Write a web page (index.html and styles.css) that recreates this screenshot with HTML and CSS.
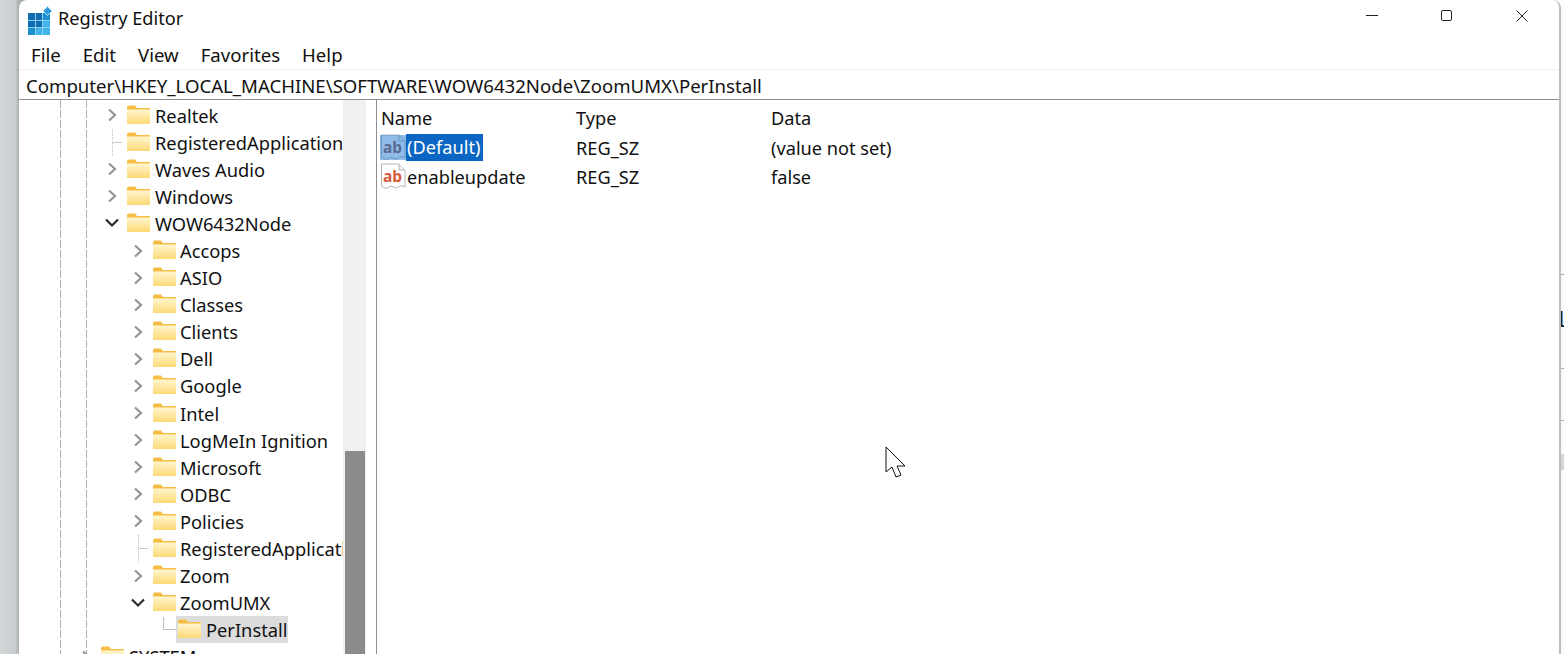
FILE: index.html
```html
<!DOCTYPE html>
<html lang="en">
<head>
<meta charset="utf-8">
<title>Registry Editor</title>
<link rel="stylesheet" href="styles.css">
</head>
<body>
<svg class="defs" width="0" height="0" aria-hidden="true">
  <defs>
    <linearGradient id="fg" x1="0" y1="0" x2="0" y2="1">
      <stop offset="0" stop-color="#fff6cf"/>
      <stop offset="1" stop-color="#fcd975"/>
    </linearGradient>
    <symbol id="folder" viewBox="0 0 23 19">
      <path d="M0 2.500Q0 .5 2 .5H8L10 3H23V18Q23 19 22 19H1Q0 19 0 18Z" fill="#f6bd45"/>
      <path d="M0 4.500H23V18Q23 19 22 19H1Q0 19 0 18Z" fill="url(#fg)"/>
    </symbol>
    <symbol id="closed" viewBox="0 0 12 16"><path d="M3 2.500L9 8L3 13.500" fill="none" stroke="#949494" stroke-width="2.200"/></symbol>
    <symbol id="open" viewBox="0 0 14 12"><path d="M1 2.500L7 8.500L13 2.500" fill="none" stroke="#2b2b2b" stroke-width="2.200"/></symbol>
    <symbol id="ab" viewBox="0 0 26 27">
      <path d="M1.500 1H19L25 7V24L21 22.500L16 25L11 23L6 25.500L1.500 23Z" fill="#fff" stroke="#b4b4b4" stroke-width="1"/>
      <path d="M19 1V7H25" fill="#f2f2f2" stroke="#b4b4b4" stroke-width="1"/>
    </symbol>
  </defs>
</svg>
<div class="desktop-left"></div>
<main class="window">
  <header class="titlebar">
    <svg class="app-icon" width="24" height="29" viewBox="0 0 24 29" aria-hidden="true">
      <rect x="0" y="7" width="22" height="22" fill="#1d8fd0"/>
      <path d="M0 14.500H22M0 21.500H22M7.500 7V29M14.500 7V29" stroke="#8fd0ee" stroke-width="1"/>
      <rect x="0" y="7" width="7" height="7" fill="#0f6cb0"/>
      <rect x="8" y="7" width="6" height="7" fill="#0f6cb0"/>
      <rect x="0" y="15" width="7" height="6" fill="#0f6cb0"/>
      <rect x="8" y="15" width="6" height="6" fill="#0f6cb0"/>
      <rect x="15" y="22" width="7" height="7" fill="#3fb4e8"/>
      <rect x="8" y="22" width="6" height="7" fill="#3fb4e8"/>
      <rect x="15" y="15" width="7" height="6" fill="#3fb4e8"/>
      <path d="M19.500 0.500L24 5L19.500 9.500L15 5Z" fill="#2f9bd8" stroke="#bfe3f5" stroke-width="1"/>
    </svg>
    <span class="title">Registry Editor</span>
    <div class="controls">
      <svg class="ctl" width="12" height="12" viewBox="0 0 12 12" aria-hidden="true"><path d="M0 5.500H12" stroke="#222" stroke-width="1"/></svg>
      <svg class="ctl" width="12" height="12" viewBox="0 0 12 12" aria-hidden="true"><rect x=".5" y=".5" width="10" height="10" rx="1.500" fill="none" stroke="#222" stroke-width="1"/></svg>
      <svg class="ctl" width="12" height="12" viewBox="0 0 12 12" aria-hidden="true"><path d="M.5 .5L11.500 11.500M11.500 .5L.5 11.500" stroke="#222" stroke-width="1"/></svg>
    </div>
  </header>
  <nav class="menubar">
    <span>File</span><span>Edit</span><span>View</span><span>Favorites</span><span>Help</span>
  </nav>
  <div class="address">Computer\HKEY_LOCAL_MACHINE\SOFTWARE\WOW6432Node\ZoomUMX\PerInstall</div>
  <div class="panes">
    <section class="tree">
      <div class="rows">
        <div class="row l1"><svg class="tw"><use href="#closed"/></svg><svg class="fo"><use href="#folder"/></svg><span>Realtek</span></div>
        <div class="row l1"><i class="tw stub"></i><svg class="fo"><use href="#folder"/></svg><span>RegisteredApplications</span></div>
        <div class="row l1"><svg class="tw"><use href="#closed"/></svg><svg class="fo"><use href="#folder"/></svg><span>Waves Audio</span></div>
        <div class="row l1"><svg class="tw"><use href="#closed"/></svg><svg class="fo"><use href="#folder"/></svg><span>Windows</span></div>
        <div class="row l1"><svg class="tw op"><use href="#open"/></svg><svg class="fo"><use href="#folder"/></svg><span>WOW6432Node</span></div>
        <div class="row l2"><svg class="tw"><use href="#closed"/></svg><svg class="fo"><use href="#folder"/></svg><span>Accops</span></div>
        <div class="row l2"><svg class="tw"><use href="#closed"/></svg><svg class="fo"><use href="#folder"/></svg><span>ASIO</span></div>
        <div class="row l2"><svg class="tw"><use href="#closed"/></svg><svg class="fo"><use href="#folder"/></svg><span>Classes</span></div>
        <div class="row l2"><svg class="tw"><use href="#closed"/></svg><svg class="fo"><use href="#folder"/></svg><span>Clients</span></div>
        <div class="row l2"><svg class="tw"><use href="#closed"/></svg><svg class="fo"><use href="#folder"/></svg><span>Dell</span></div>
        <div class="row l2"><svg class="tw"><use href="#closed"/></svg><svg class="fo"><use href="#folder"/></svg><span>Google</span></div>
        <div class="row l2"><svg class="tw"><use href="#closed"/></svg><svg class="fo"><use href="#folder"/></svg><span>Intel</span></div>
        <div class="row l2"><svg class="tw"><use href="#closed"/></svg><svg class="fo"><use href="#folder"/></svg><span>LogMeIn Ignition</span></div>
        <div class="row l2"><svg class="tw"><use href="#closed"/></svg><svg class="fo"><use href="#folder"/></svg><span>Microsoft</span></div>
        <div class="row l2"><svg class="tw"><use href="#closed"/></svg><svg class="fo"><use href="#folder"/></svg><span>ODBC</span></div>
        <div class="row l2"><svg class="tw"><use href="#closed"/></svg><svg class="fo"><use href="#folder"/></svg><span>Policies</span></div>
        <div class="row l2"><i class="tw stub"></i><svg class="fo"><use href="#folder"/></svg><span>RegisteredApplications</span></div>
        <div class="row l2"><svg class="tw"><use href="#closed"/></svg><svg class="fo"><use href="#folder"/></svg><span>Zoom</span></div>
        <div class="row l2"><svg class="tw op"><use href="#open"/></svg><svg class="fo"><use href="#folder"/></svg><span>ZoomUMX</span></div>
        <div class="row l3"><i class="tw elbow"></i><div class="sel"><svg class="fo"><use href="#folder"/></svg><span>PerInstall</span></div></div>
        <div class="row l0"><svg class="tw"><use href="#closed"/></svg><svg class="fo"><use href="#folder"/></svg><span>SYSTEM</span></div>
      </div>
      <div class="scrollbar"><div class="thumb"></div></div>
    </section>
    <section class="list">
      <div class="list-row head"><span class="c-name">Name</span><span class="c-type">Type</span><span>Data</span></div>
      <div class="list-row">
        <span class="c-name"><span class="val-icon sel-icon"><svg width="26" height="27" aria-hidden="true"><use href="#ab"/></svg><b>ab</b></span><span class="hl">(Default)</span></span>
        <span class="c-type">REG_SZ</span><span>(value not set)</span>
      </div>
      <div class="list-row">
        <span class="c-name"><span class="val-icon"><svg width="26" height="27" aria-hidden="true"><use href="#ab"/></svg><b>ab</b></span><span class="nm">enableupdate</span></span>
        <span class="c-type">REG_SZ</span><span>false</span>
      </div>
      <svg class="cursor" width="22" height="32" viewBox="0 0 22 32" aria-hidden="true"><path d="M1 1V26L7 21L11 31L16 29L12 20H20Z" fill="#fff" stroke="#111" stroke-width="1"/></svg>
    </section>
  </div>
</main>
<div class="desktop-right">
  <div class="mark m1"></div><div class="glyph">1</div><div class="mark m2"></div><div class="mark m3"></div><div class="mark m4"></div>
</div>
</body>
</html>
```
FILE: styles.css
```css
* { box-sizing: border-box; }
html, body { margin: 0; height: 100%; }
body {
  display: flex;
  height: 654px;
  overflow: hidden;
  background: #fff;
  color: #111;
  font-family: "Noto Sans", "Open Sans", sans-serif;
  font-size: 18.6px;
}
.defs { position: absolute; }
.desktop-left {
  width: 27px;
  margin-right: -8px;
  flex: none;
  background: linear-gradient(90deg, #d2d7d8 0, #c8cecf 15px, #a9aeaf 19px);
}
.window {
  width: 1542px;
  flex: none;
  position: relative;
  display: flex;
  flex-direction: column;
  background: #fff;
  overflow: hidden;
  border-right: 2px solid #bdbdbd;
  border-radius: 8px 8px 0 0;
}
.titlebar {
  height: 37px;
  flex: none;
  display: flex;
  align-items: center;
  padding-left: 9px;
}
.app-icon { flex: none; margin-right: 6px; margin-top: 3px; }
.title { font-size: 18.2px; margin-top: -2px; }
.controls {
  margin-left: auto;
  display: flex;
  gap: 63px;
  padding-right: 31px;
  margin-top: -5px;
}
.menubar {
  height: 33px;
  flex: none;
  display: flex;
  align-items: center;
  gap: 22px;
  padding: 2px 0 0 12px;
  border-bottom: 1px solid #efefef;
}
.address {
  height: 30px;
  flex: none;
  display: flex;
  align-items: center;
  padding: 1px 0 0 7px;
  border-bottom: 1px solid #8f8f8f;
  white-space: nowrap;
}
.panes { flex: 1; display: flex; min-height: 0; font-size: 18.2px; }
.tree {
  width: 347px;
  flex: none;
  display: flex;
  font-size: 18.3px;
  background-image:
    repeating-linear-gradient(180deg, #b0b0b0 0 8px, #fff 8px 10px),
    repeating-linear-gradient(180deg, #b0b0b0 0 8px, #fff 8px 10px);
  background-size: 1px 100%, 1px 100%;
  background-position: 41px 0, 67px 0;
  background-repeat: no-repeat;
}
.rows { width: 324px; flex: none; overflow: hidden; padding-top: 2.5px; }
.row {
  height: 27.1px;
  padding-bottom: 2px;
  display: flex;
  align-items: center;
  white-space: nowrap;
}
.row.l0 { padding-left: 61px; }
.row.l1 { padding-left: 87px; }
.row.l2 { padding-left: 113px; }
.row.l3 { padding-left: 139px; }
.tw { width: 12px; height: 16px; margin-right: 9px; flex: none; display: block; }
.tw.op { width: 14px; height: 12px; margin: 0 8px 0 -1px; }
.fo { width: 23px; height: 19px; flex: none; margin-right: 5px; margin-top: -2px; }
.l2 .fo { margin-right: 4px; }
.sel {
  display: flex;
  align-items: center;
  height: 27px;
  background: #dcdcdc;
  padding-right: 1px;
  margin-left: -1px;
}
.sel .fo { margin: -2px 5px 0 2px; }
.stub {
  height: 27px;
  margin-left: 6px;
  margin-right: 3px;
  width: 12px;
  border-left: 1px dotted #bbb;
  background: linear-gradient(#c4c4c4, #c4c4c4) 0 50% / 9px 1px no-repeat;
}
.elbow {
  border-left: 1px solid #c0c0c0;
  border-bottom: 1px solid #c0c0c0;
  height: 13px;
  width: 14px;
  margin: -13px 0 0 5px;
}
.scrollbar {
  width: 23px;
  flex: none;
  background: #f0f0f0;
  display: flex;
  flex-direction: column;
  justify-content: flex-end;
  padding: 0 1px 0 2px;
}
.thumb { height: 203px; background: #8b8b8b; }
.list {
  flex: 1;
  position: relative;
  margin-left: 10px;
  border-left: 1px solid #8f8f8f;
  padding-left: 4px;
}
.list-row { display: flex; align-items: center; height: 29px; white-space: nowrap; }
.list-row.head { height: 33px; padding-top: 2px; }
.c-name { width: 195px; flex: none; display: flex; align-items: center; }
.c-type { width: 195px; flex: none; }
.val-icon { position: relative; width: 26px; height: 27px; margin-left: -1px; flex: none; }
.val-icon svg { display: block; }
.val-icon b {
  position: absolute;
  left: 3px;
  top: 5px;
  font: 700 15.5px/16px "Noto Sans", sans-serif;
  color: #d6593a;
}
.sel-icon::after {
  content: "";
  position: absolute;
  inset: 1px 0;
  background: rgba(30, 120, 210, .5);
}
.sel-icon b { color: #5a6a94; z-index: 1; }
.hl { background: #0a66c2; color: #fff; padding: 0 3px 0 1px; line-height: 27px; }
.nm { padding-left: 1px; }
.cursor { position: absolute; left: 508px; top: 346px; }
.desktop-right {
  width: 3px;
  flex: none;
  position: relative;
  background: #fafafa;
  overflow: hidden;
}
.mark { position: absolute; left: 0; right: 0; height: 1px; background: #aaa; }
.m1 { top: 274px; }
.m2 { top: 368px; }
.m3 { top: 420px; }
.m4 { top: 454px; height: 16px; background: #d5d5d5; }
.glyph { position: absolute; left: 0; top: 307px; font: 22px/26px "DejaVu Sans", sans-serif; text-indent: -7px; color: #222; }
```
